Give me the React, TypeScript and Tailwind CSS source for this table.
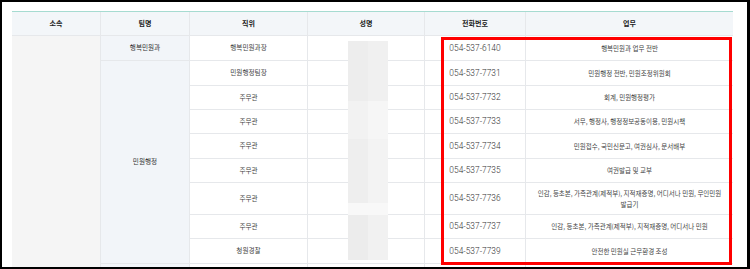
import React from "react";

const KR = { fontFamily: '"Noto Sans CJK KR", "Noto Sans", sans-serif' };
const NUM = { fontFamily: 'Roboto, "Liberation Sans", Arial, sans-serif' };

type Row = { pos: string; tel: string; job: React.ReactNode; h: string };

const rows: Row[] = [
  { pos: "행복민원과장", tel: "054-537-6140", job: "행복민원과 업무 전반", h: "h-[25px]" },
  { pos: "민원행정팀장", tel: "054-537-7731", job: "민원행정 전반, 민원조정위원회", h: "h-[25px]" },
  { pos: "주무관", tel: "054-537-7732", job: "회계, 민원행정평가", h: "h-[24px]" },
  { pos: "주무관", tel: "054-537-7733", job: "서무, 행정사, 행정정보공동이용, 민원시책", h: "h-[24px]" },
  { pos: "주무관", tel: "054-537-7734", job: "민원접수, 국민신문고, 여권심사, 문서배부", h: "h-[25px]" },
  { pos: "주무관", tel: "054-537-7735", job: "여권발급 및 교부", h: "h-[24px]" },
  {
    pos: "주무관",
    tel: "054-537-7736",
    job: (
      <>
        인감, 등초본, 가족관계(제적부), 지적재증명, 어디서나 민원, 무인민원
        <br />
        발급기
      </>
    ),
    h: "h-[32px]",
  },
  { pos: "주무관", tel: "054-537-7737", job: "인감, 등초본, 가족관계(제적부), 지적재증명, 어디서나 민원", h: "h-[24px]" },
  { pos: "청원경찰", tel: "054-537-7739", job: "안전한 민원실 근무환경 조성", h: "h-[25px]" },
];

const cellB = "border-b border-r border-[#e6e8eb] flex items-center justify-center text-center";

export default function App() {
  return (
    <div className="w-[750px] h-[269px] bg-white border-t-2 border-l-2 border-b-2 border-r-[3px] border-black overflow-hidden pl-[10px] pt-[9px]">
      <div className="relative w-[721px]">
        <div
          className="grid grid-cols-[89px_89px_118px_117px_101px_207px] border-t border-[#a6dbd1]"
          style={KR}
        >
          {["소속", "팀명", "직위", "성명", "전화번호", "업무"].map((t, i) => (
            <div
              key={t}
              className={`h-[24px] bg-[#f3f6f9] border-b border-[#e6e8eb] flex items-center justify-center text-[7px] font-bold text-[#222] ${
                i < 5 ? "border-r" : ""
              }`}
            >
              {t}
            </div>
          ))}

          <div className="bg-[#f5f5f5] border-r border-[#e6e8eb]" style={{ gridRow: "2 / span 10", gridColumn: "1" }} />

          <div
            className={`${cellB} bg-[#f2f5f9] text-[6.6px] text-[#333]`}
            style={{ gridRow: "2", gridColumn: "2" }}
          >
            행복민원과
          </div>
          <div
            className={`${cellB} bg-[#f2f5f9] text-[6.6px] text-[#333]`}
            style={{ gridRow: "3 / span 8", gridColumn: "2" }}
          >
            민원행정
          </div>
          <div
            className={`${cellB} bg-[#f2f5f9]`}
            style={{ gridRow: "11", gridColumn: "2" }}
          />

          {rows.map((r, i) => (
            <React.Fragment key={i}>
              <div
                className={`${cellB} ${r.h} text-[6.6px] text-[#444]`}
                style={{ gridRow: String(i + 2), gridColumn: "3" }}
              >
                {r.pos}
              </div>
              <div
                className={`${cellB} ${r.h}`}
                style={{ gridRow: String(i + 2), gridColumn: "4" }}
              />
              <div
                className={`${cellB} ${r.h} text-[8.4px] font-light text-[#333]`}
                style={{ ...NUM, gridRow: String(i + 2), gridColumn: "5" }}
              >
                {r.tel}
              </div>
              <div
                className={`border-b border-[#e6e8eb] flex items-center justify-center text-center ${r.h} px-[2px] text-[6.5px] leading-[11px] text-[#444]`}
                style={{ gridRow: String(i + 2), gridColumn: "6" }}
              >
                <span>{r.job}</span>
              </div>
            </React.Fragment>
          ))}

          <div className={`${cellB} h-[24px]`} style={{ gridRow: "11", gridColumn: "3" }} />
          <div className={`${cellB} h-[24px]`} style={{ gridRow: "11", gridColumn: "4" }} />
          <div className={`${cellB} h-[24px]`} style={{ gridRow: "11", gridColumn: "5" }} />
          <div className="border-b border-[#e6e8eb] h-[24px]" style={{ gridRow: "11", gridColumn: "6" }} />
        </div>

        {/* blurred name column overlay */}
        <div className="absolute left-[336px] top-[30px] w-[40px] h-[219px] flex flex-col">
          <div className="h-[60px] flex">
            <div className="w-[20px] bg-[#ededed]" />
            <div className="w-[20px] bg-[#f0f0f0]" />
          </div>
          <div className="h-[38px] flex">
            <div className="w-[20px] bg-[#f2f2f2]" />
            <div className="w-[20px] bg-[#f6f6f6]" />
          </div>
          <div className="h-[64px] flex">
            <div className="w-[20px] bg-[#eeeeee]" />
            <div className="w-[20px] bg-[#f3f3f3]" />
          </div>
          <div className="h-[12px] bg-[#f8f8f8]" />
          <div className="h-[45px] flex">
            <div className="w-[20px] bg-[#ececec]" />
            <div className="w-[20px] bg-[#f1f1f1]" />
          </div>
        </div>

        {/* red highlight box */}
        <div className="absolute left-[429px] top-[26px] w-[291px] h-[228px] border-[3px] border-[#ff0000]" />
      </div>
    </div>
  );
}
